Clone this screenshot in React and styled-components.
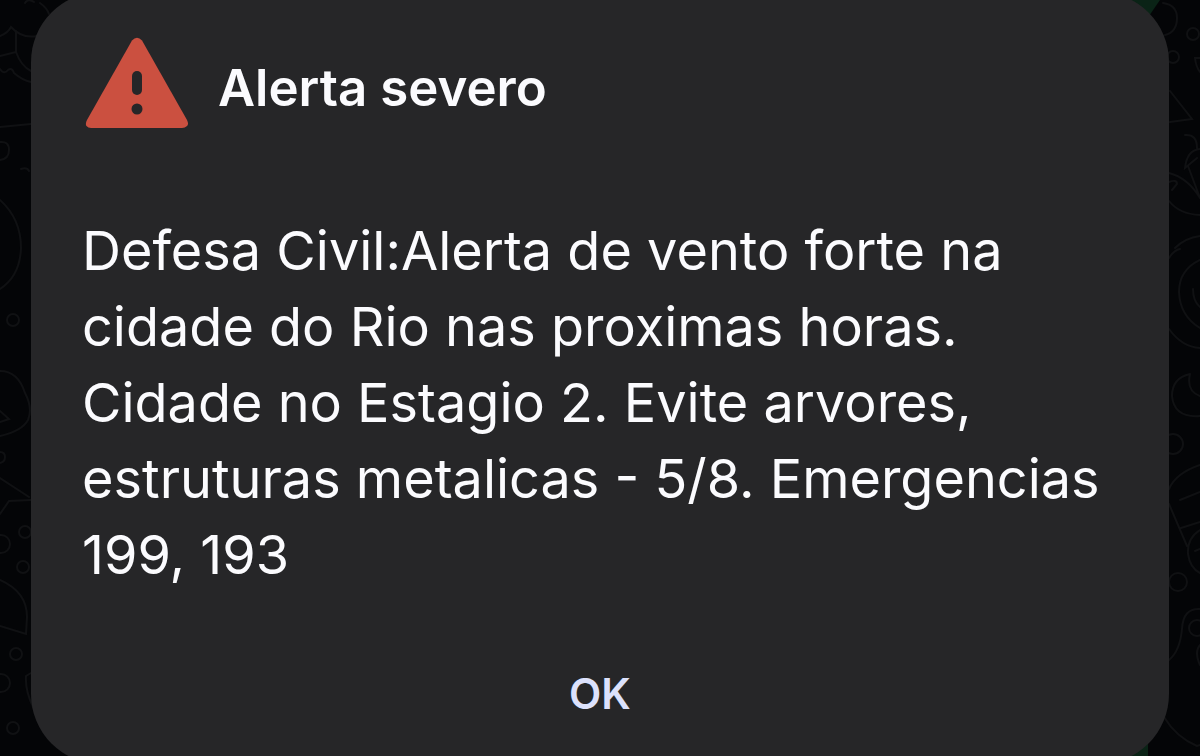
import React from "react";
import styled, { createGlobalStyle } from "styled-components";

const GlobalStyle = createGlobalStyle`
  * { box-sizing: border-box; }
  body { margin: 0; background: #040507; }
`;

const Screen = styled.main`
  position: relative;
  display: flex;
  min-height: 100vh;
  padding: 0 31px;
  overflow: hidden;
  background: #040507;
  font-family: Inter, "Liberation Sans", sans-serif;
`;

const Doodles = styled.svg`
  position: absolute;
  top: 0;
  ${(p) => p.$side}: 0;
  width: 80px;
  height: 756px;
  fill: none;
  stroke: #101113;
  stroke-width: 2;
  stroke-linecap: round;
`;

const Dialog = styled.section`
  position: relative;
  flex: 1;
  display: flex;
  flex-direction: column;
  margin: -8px 0;
  padding: 44px 51px 36px;
  border-radius: 70px;
  background: #262628;
`;

const Header = styled.header`
  display: flex;
  align-items: center;
  gap: 28px;
`;

const WarningIcon = styled.svg`
  flex: none;
  width: 108px;
  height: 96px;
`;

const Title = styled.h1`
  margin: 0;
  padding-top: 8px;
  color: #fbfbfe;
  font-size: 51px;
  line-height: 64px;
  font-weight: 600;
`;

const Message = styled.p`
  flex: 1;
  margin: 81px 0 39px;
  color: #fbfbfe;
  font-size: 54px;
  line-height: 76px;
`;

const ConfirmButton = styled.button`
  align-self: center;
  padding: 8px 32px;
  border: 0;
  background: transparent;
  color: #dce1fc;
  font-family: inherit;
  font-size: 42px;
  line-height: 52px;
  font-weight: 600;
  cursor: pointer;
`;

function LeftDoodles() {
  return (
    <Doodles $side="left" viewBox="0 0 80 756" aria-hidden="true">
      <path d="M25 3Q28-2 34 2M40 3Q47 8 49 14M0 36Q8 33 11 27Q22 39 37 36M16 31V52Q8 54 0 56M16 52Q21 66 31 71M0 69Q4 75 8 70Q12 67 14 73Q22 80 31 82M0 127L31 124M0 142Q9 141 9 150Q9 159 0 160M21 169Q27 167 29 171M0 200Q21 219 21 248Q20 276 0 289" />
      <circle cx="13" cy="320" r="6" />
      <path d="M0 371Q18 371 25 393Q33 408 28 420Q22 431 0 436M0 411L9 419L0 422M0 452Q5 452 5 457Q5 462 0 463M0 478L29 497M0 514L9 501L31 500" />
      <circle cx="1" cy="544" r="9" />
      <circle cx="25" cy="532" r="6" />
      <circle cx="23" cy="567" r="6" />
      <path d="M0 580Q27 592 27 617L26 634L0 626M31 673L26 676Q25 690 33 707" />
      <circle cx="16" cy="654" r="6" />
      <circle cx="1" cy="683" r="9" />
      <circle cx="13" cy="728" r="6" />
    </Doodles>
  );
}

function RightDoodles() {
  return (
    <Doodles $side="right" viewBox="1120 0 80 756" aria-hidden="true">
      <path d="M1128 0H1160L1149 16ZM1130 756L1148 740V756Z" fill="#0a2316" stroke="none" />
      <path d="M1163 3Q1177 5 1177 18Q1177 32 1165 35" />
      <circle cx="1193" cy="34" r="6" />
      <circle cx="1173" cy="57" r="6" />
      <path d="M1200 58H1195Q1196 67 1200 72M1170 91L1192 119L1170 122M1185 135Q1197 134 1197 148M1200 149Q1187 150 1185 168L1197 158M1188 166L1200 198M1169 173Q1188 178 1200 198M1169 182Q1177 179 1177 184L1172 190M1169 201Q1179 214 1200 215M1175 248Q1185 238 1200 236M1169 258Q1174 250 1180 249M1200 260Q1179 270 1179 292Q1180 316 1200 328M1193 289Q1193 301 1200 307M1169 329Q1182 347 1200 348M1190 374Q1172 378 1172 396Q1174 418 1200 416M1190 374Q1186 391 1200 396" />
      <circle cx="1173" cy="444" r="10" />
      <path d="M1169 489Q1176 473 1200 465M1180 500L1200 492M1169 504L1187 546M1181 528L1200 522M1200 530Q1187 538 1188 554Q1190 568 1200 573M1195 551L1200 549" />
      <circle cx="1178" cy="582" r="9" />
      <path d="M1200 609Q1183 608 1182 629Q1180 651 1169 660M1200 645Q1194 652 1200 665M1164 717Q1176 737 1197 746L1200 745" />
      <circle cx="1197" cy="628" r="8" />
    </Doodles>
  );
}

export default function App() {
  return (
    <>
      <GlobalStyle />
      <Screen>
        <LeftDoodles />
        <RightDoodles />
        <Dialog role="alertdialog" aria-labelledby="alert-title" aria-describedby="alert-message">
          <Header>
            <WarningIcon viewBox="0 0 108 96" aria-hidden="true">
              <path d="M50 4.500Q55-1 60 4.500L62 8L105 84Q107 88 105 90Q103 92 100 92H9Q6 92 4.500 90Q3 88 5 84L48 8Z" fill="#cb5040" />
              <rect x="50" y="35" width="10" height="24" rx="5" fill="#262628" />
              <circle cx="55" cy="73" r="5.500" fill="#262628" />
            </WarningIcon>
            <Title id="alert-title">Alerta severo</Title>
          </Header>
          <Message id="alert-message">
            Defesa Civil:Alerta de vento forte na
            <br />
            cidade do Rio nas proximas horas.
            <br />
            Cidade no Estagio 2. Evite arvores,
            <br />
            estruturas metalicas - 5/8. Emergencias
            <br />
            199, 193
          </Message>
          <ConfirmButton type="button">OK</ConfirmButton>
        </Dialog>
      </Screen>
    </>
  );
}
